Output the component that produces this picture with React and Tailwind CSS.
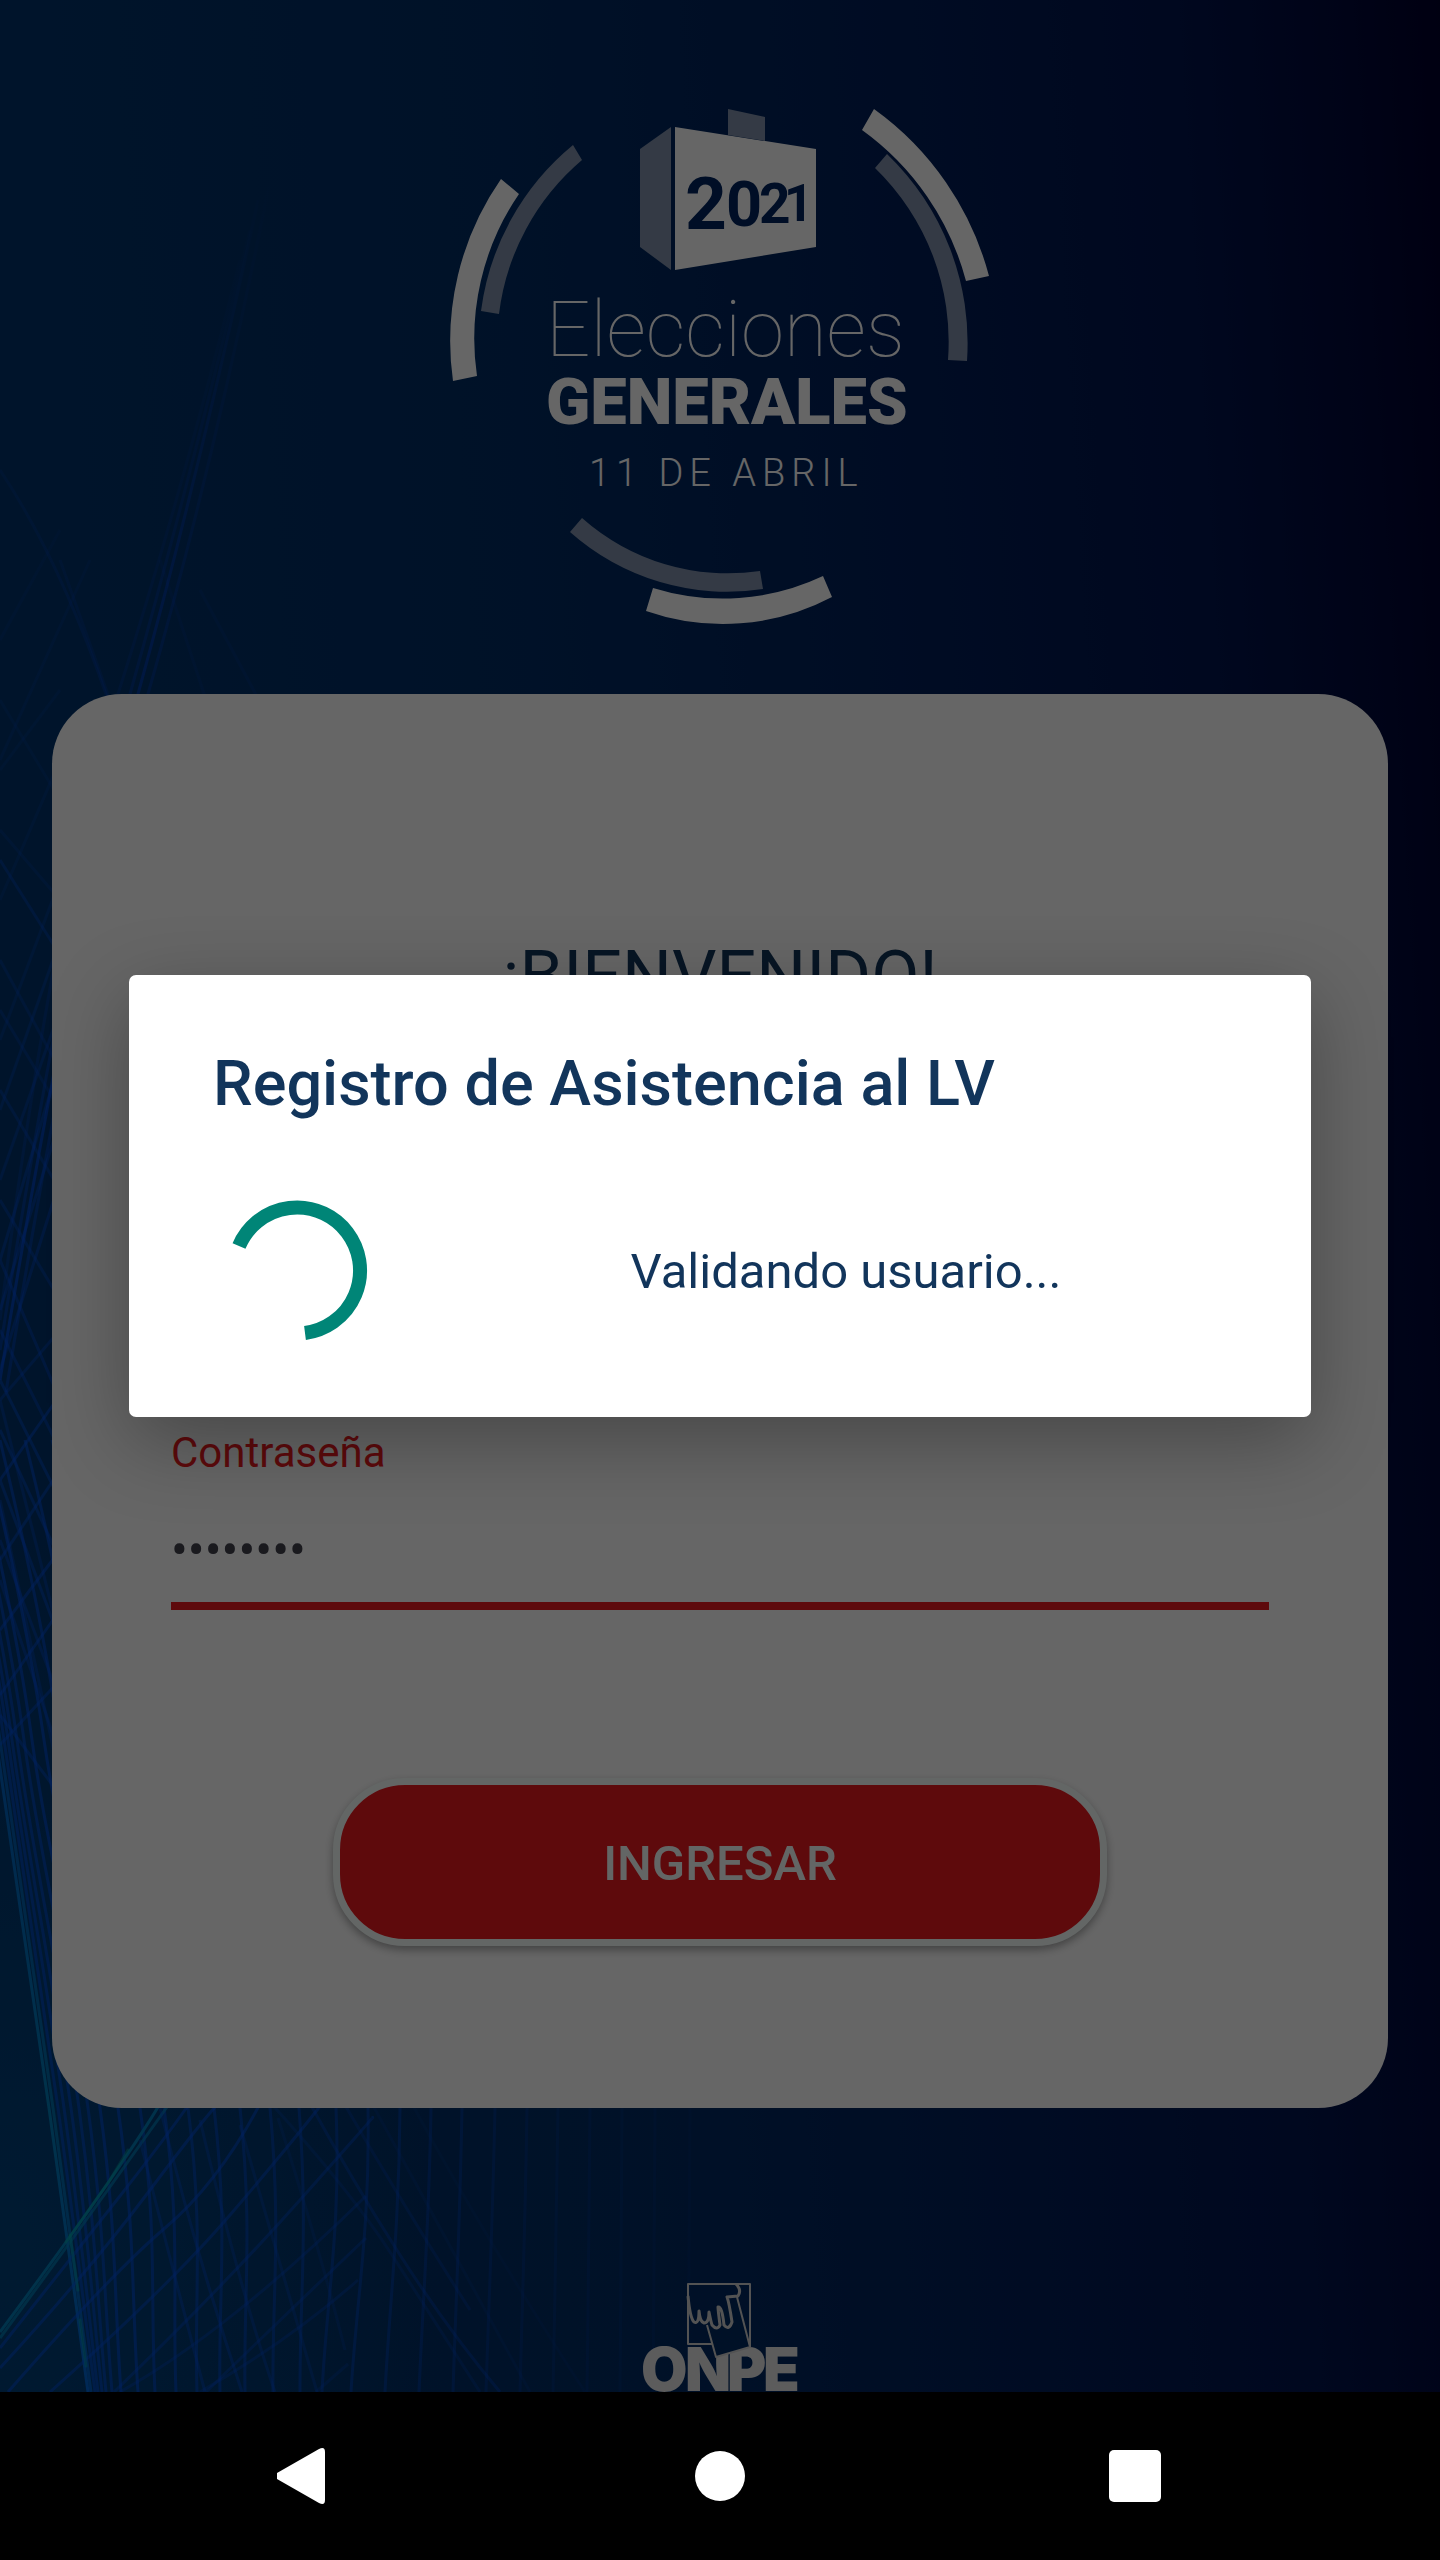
import React from "react";

/* Bundle that bends down from the left edge into the lower fan: [x at y=1740, x at y=2108, x at y=2392, opacity] */
const FAN = [
  [-4, 49, 88, 0.9], [0, 53, 91, 0.7], [4, 58, 95, 0.5], [8, 64, 98, 0.5], [12, 71, 102, 0.5],
  [17, 79, 106, 0.5], [24, 88, 112, 0.5], [32, 100, 121, 0.55], [44, 118, 138, 0.55], [60, 140, 155, 0.5],
  [85, 164, 176, 0.5], [112, 188, 197, 0.45], [142, 214, 220, 0.45], [175, 240, 245, 0.42], [212, 270, 273, 0.4],
  [250, 299, 300, 0.4], [295, 336, 322, 0.38], [340, 368, 351, 0.38], [390, 400, 385, 0.34], [430, 431, 419, 0.3],
  [465, 462, 453, 0.28], [500, 495, 486, 0.22], [530, 527, 520, 0.18], [560, 558, 553, 0.14], [590, 590, 587, 0.12],
  [622, 622, 620, 0.1], [655, 655, 653, 0.08], [690, 690, 688, 0.06],
];

function fanPath(a, b, c) {
  const upper = (c - a) / 652;
  const lower = (c - b) / 284;
  return [
    `M${a - 60} 1440 Q${a - upper * 130} 1610 ${a} 1740`,
    `C${a + upper * 123} 1863 ${b - upper * 123} 1985 ${b} 2108`,
    `S${c - lower * 95} 2297 ${c} 2392`,
  ].join(" ");
}

/* Strands rising from the lower left corner */
const RISING = [
  ["M0 2332 Q70 2238 110 2180 T162 2100", 0.9],
  ["M0 2338 Q72 2240 112 2184 T172 2100", 0.7],
  ["M0 2348 Q76 2252 120 2196 T192 2100", 0.5],
  ["M0 2368 Q90 2270 150 2190 T222 2100", 0.5],
  ["M8 2392 Q110 2275 165 2228 T262 2100", 0.5],
  ["M50 2392 Q170 2285 230 2215 T325 2100", 0.45],
  ["M114 2392 Q220 2290 300 2200 T372 2118", 0.38],
  ["M206 2392 Q280 2320 366 2238", 0.3],
  ["M120 2392 Q230 2330 366 2196", 0.3],
  ["M200 2392 Q290 2340 358 2280", 0.28],
  ["M316 2392 L348 2364", 0.2],
];

/* Strands falling to the right */
const FALLING = [
  ["M140 2140 Q165 2240 205 2392", 0.35],
  ["M160 2108 Q195 2250 242 2392", 0.35],
  ["M200 2120 Q240 2290 275 2392", 0.3],
  ["M240 2125 Q290 2300 317 2392", 0.26],
  ["M278 2118 Q320 2250 345 2350", 0.18],
  ["M268 2100 Q350 2190 392 2255 T480 2392", 0.2],
  ["M308 2100 Q352 2180 400 2255 T500 2392", 0.3],
  ["M342 2100 Q400 2200 470 2310", 0.22],
  ["M370 2100 Q430 2210 530 2392", 0.12],
  ["M410 2100 Q480 2230 585 2392", 0.08],
];

/* Long strands seen beside and above the card */
const LONG = [
  ["M258 200 Q200 470 138 694 T0 1380", 1],
  ["M250 230 Q190 480 130 694 T0 1350", 0.6],
  ["M240 260 Q180 500 118 694 T0 1320", 0.4],
  ["M270 180 Q215 460 148 694 T6 1392", 0.6],
  ["M0 470 Q60 560 108 700", 0.5],
  ["M60 560 L112 706", 0.4],
  ["M160 560 L208 706", 0.25],
  ["M200 590 L262 706", 0.25],
  ["M0 640 L60 530", 0.25],
  ["M0 760 L90 560", 0.3],
];

/* Lattice in the strip left of the card: [y at x=0, y at x=60, opacity] */
const LATTICE = [
  [700, 800, 0.12], [770, 690, 0.12], [830, 900, 0.16], [860, 955, 0.3], [900, 760, 0.14], [960, 1070, 0.22],
  [1040, 880, 0.2], [1010, 1110, 0.22], [1110, 940, 0.26], [1090, 1190, 0.28], [1180, 1010, 0.28], [1200, 1300, 0.3],
  [1260, 1060, 0.34], [1310, 1120, 0.35], [1260, 1400, 0.35], [1370, 1180, 0.35], [1330, 1450, 0.35], [1400, 1330, 0.3],
  [1380, 1500, 0.4], [1480, 1395, 0.45], [1430, 1560, 0.4], [1560, 1470, 0.4], [1480, 1640, 0.4], [1630, 1550, 0.45],
  [1540, 1700, 0.35], [1695, 1610, 0.45], [1580, 1755, 0.35], [1745, 1680, 0.4], [1500, 1780, 0.3], [1400, 1640, 0.3],
  [1715, 1795, 0.4],
];

function Backdrop() {
  return (
    <svg
      className="absolute inset-0 h-full w-full"
      viewBox="0 0 1440 2392"
      preserveAspectRatio="xMidYMid slice"
      aria-hidden="true"
    >
      <defs>
        <linearGradient id="base" x1="0" y1="0.1" x2="1" y2="0">
          <stop offset="0" stopColor="#00346c" />
          <stop offset="0.35" stopColor="#002c64" />
          <stop offset="0.6" stopColor="#00205a" />
          <stop offset="0.82" stopColor="#00144e" />
          <stop offset="0.94" stopColor="#00083a" />
          <stop offset="1" stopColor="#00002c" />
        </linearGradient>
        <radialGradient id="glow" cx="0" cy="0.94" r="0.3">
          <stop offset="0" stopColor="#00427c" />
          <stop offset="1" stopColor="#00427c" stopOpacity="0" />
        </radialGradient>
        <linearGradient id="bundle" gradientUnits="userSpaceOnUse" x1="0" y1="1700" x2="0" y2="2392">
          <stop offset="0" stopColor="#0060d0" />
          <stop offset="0.6" stopColor="#0084c0" />
          <stop offset="1" stopColor="#0068e0" />
        </linearGradient>
        <linearGradient id="fade" gradientUnits="userSpaceOnUse" x1="0" y1="180" x2="0" y2="1300">
          <stop offset="0" stopColor="#0048f0" stopOpacity="0" />
          <stop offset="0.4" stopColor="#0048f0" stopOpacity="0.4" />
          <stop offset="1" stopColor="#0050f0" stopOpacity="0.6" />
        </linearGradient>
      </defs>
      <rect width="1440" height="2392" fill="url(#base)" />
      <rect width="1440" height="2392" fill="url(#glow)" />
      <g fill="none" strokeWidth="3">
        {FAN.map(([a, b, c, o], i) => (
          <path key={i} d={fanPath(a, b, c)} stroke={i < 2 ? "url(#bundle)" : "#0054f0"} strokeOpacity={o} />
        ))}
        {RISING.map(([d, o], i) => (
          <path key={i} d={d} stroke={i < 2 ? "#0084c0" : "#0054f0"} strokeOpacity={o} />
        ))}
        {FALLING.map(([d, o], i) => (
          <path key={i} d={d} stroke="#0054f0" strokeOpacity={o} />
        ))}
        {LONG.map(([d, o], i) => (
          <path key={i} d={d} stroke="url(#fade)" strokeOpacity={o} />
        ))}
        {LATTICE.map(([a, b, o], i) => (
          <path key={i} d={`M0 ${a} L60 ${b}`} stroke="#0054f0" strokeOpacity={o} />
        ))}
      </g>
      <g fill="none" stroke="#00b4a8" strokeLinecap="round" strokeWidth="3" strokeOpacity="0.4">
        <path d="M66 2242 L110 2180 L128 2150" />
        <path d="M70 2235 L78 2290 M80 2320 L86 2366" />
      </g>
    </svg>
  );
}

function ElectionEmblem() {
  return (
    <svg
      className="h-auto w-[540px] max-w-full"
      viewBox="450 108 540 517"
      role="img"
      aria-label="2021 Elecciones Generales, 11 de abril"
      fontFamily="Roboto, sans-serif"
    >
      <g fill="#ffffff">
        <path d="M874 109 A300 300 0 0 1 989 276 L966 281 A272 272 0 0 0 862 130 Z" />
        <path d="M501 179 L519 194 A256 256 0 0 0 477 376 L453 381 A284 284 0 0 1 501 179 Z" />
        <path d="M653 588 A235 235 0 0 0 823 576 L832 597 A234 234 0 0 1 646 611 Z" />
        <path d="M675 127 L816 149 V247 L675 270 Z" />
      </g>
      <g fill="#8292ac">
        <path d="M887 154 A262 262 0 0 1 967 361 L948 360 A242 242 0 0 0 875 168 Z" />
        <path d="M573 145 L582 160 A240 240 0 0 0 499 314 L481 311 A258 258 0 0 1 573 145 Z" />
        <path d="M582 518 A220 220 0 0 0 760 571 L763 589 A236 236 0 0 1 570 532 Z" />
        <path d="M640 149 L671 127 V270 L640 247 Z" />
        <path d="M728 109 L765 117 V141 L728 135 Z" />
      </g>
      <g fill="#002560" fontWeight="700">
        <text x="685" y="229" fontSize="73">2</text>
        <text x="726" y="226" fontSize="63">0</text>
        <text x="759" y="223" fontSize="55">2</text>
        <text x="784" y="221" fontSize="51">1</text>
      </g>
      <g fill="#ffffff">
        <text x="546" y="356" fontSize="78" fontWeight="100">Elecciones</text>
        <text x="546" y="424" fontSize="65" fontWeight="900">GENERALES</text>
        <text x="589" y="486" fontSize="38" fontWeight="300" className="tracking-[6px]">11 DE ABRIL</text>
      </g>
    </svg>
  );
}

function OnpeLogo() {
  return (
    <svg className="h-[109px] w-[156px]" viewBox="642 2283 156 109" role="img" aria-label="ONPE">
      <g fill="#e6e6e6" fontFamily="Inter, sans-serif" fontWeight="900" fontSize="60">
        <text x="641" y="2391">O</text>
        <text x="685" y="2391">N</text>
        <text x="727" y="2391">P</text>
        <text x="763" y="2391">E</text>
      </g>
      <path d="M707 2325 L716 2357 L750 2347 L738 2298 Z" fill="#002b62" />
      <g fill="none" stroke="#cfcfcf" strokeWidth="2" strokeLinejoin="round">
        <path d="M712 2344 H688 V2284 H750 V2347" />
        <path d="M688 2296 Q690 2318 694 2322 Q699 2325 699 2311 Q700 2322 704 2323 Q709 2323 709 2312 Q711 2322 712 2325 Q717 2331 720 2325 Q718 2310 718 2307 Q722 2306 724 2325 Q729 2331 732 2322 Q729 2302 727 2297 L738 2296 Q742 2290 736 2284" strokeWidth="3" />
        <path d="M737 2297 L750 2347 L716 2357 L707 2325" />
      </g>
    </svg>
  );
}

function Spinner() {
  return (
    <svg className="size-[168px] shrink-0" viewBox="-84 -84 168 168" role="progressbar" aria-label="Cargando">
      <path d="M-58 -24 A63 63 0 1 1 8 63" fill="none" stroke="#008577" strokeWidth="14" />
    </svg>
  );
}

function LoginCard() {
  return (
    <form
      className="mt-[69px] flex w-full flex-col rounded-[70px] bg-white px-[119px] pt-[242px] pb-[162px]"
      onSubmit={(e) => e.preventDefault()}
    >
      <h1 className="text-center text-[70px] leading-[80px] text-[#12355b]">¡BIENVENIDO!</h1>
      <label htmlFor="password" className="mt-[412px] text-[42px] leading-[50px] text-[#eb1920]">
        Contraseña
      </label>
      <input
        id="password"
        type="password"
        defaultValue="12345678"
        className="h-[132px] w-full border-b-8 border-[#eb1920] bg-transparent pt-5 text-[50px] text-[#41414d] outline-none"
      />
      <button
        type="submit"
        className="mt-[168px] h-[168px] w-[774px] max-w-full self-center rounded-[72px] border-[7px] border-[#f8fffd] bg-[#eb1920] pt-1 text-[49px] font-medium text-[#f8fffd] shadow-[0_4px_8px_rgba(0,0,0,0.35)]"
      >
        INGRESAR
      </button>
    </form>
  );
}

function ProgressDialog() {
  return (
    <div className="absolute inset-0 flex items-center justify-center bg-black/60 px-[129px]">
      <div
        role="dialog"
        aria-modal="true"
        aria-labelledby="dialog-title"
        className="w-full rounded-[7px] bg-white px-[84px] pt-[72px] pb-[63px] text-[#12355b] shadow-[0_24px_80px_rgba(0,0,0,0.3)]"
      >
        <h2 id="dialog-title" className="text-[63px] leading-[74px] font-medium">
          Registro de Asistencia al LV
        </h2>
        <div className="mt-[65px] flex items-center">
          <Spinner />
          <p className="flex-1 pt-1 pl-[84px] text-center text-[49px] leading-[58px]">Validando usuario...</p>
        </div>
      </div>
    </div>
  );
}

function NavigationBar() {
  return (
    <nav className="grid h-[168px] grid-cols-3 place-items-center bg-black px-[98px]">
      <button type="button" aria-label="Atrás">
        <svg className="size-14" viewBox="0 0 56 56" fill="#fff">
          <path d="M0 25 L42 1 Q48 -2 48 4 V52 Q48 58 42 55 L0 31 Q-3 28 0 25 Z" />
        </svg>
      </button>
      <button type="button" aria-label="Inicio">
        <svg className="size-14" viewBox="0 0 56 56" fill="#fff">
          <circle cx="28" cy="28" r="25" />
        </svg>
      </button>
      <button type="button" aria-label="Recientes">
        <svg className="size-14" viewBox="0 0 56 56" fill="#fff">
          <rect x="2" y="2" width="52" height="52" rx="5" />
        </svg>
      </button>
    </nav>
  );
}

export default function App() {
  return (
    <div className="flex min-h-screen flex-col bg-black font-['Roboto',sans-serif]">
      <main className="relative flex flex-1 flex-col items-center overflow-hidden px-[52px]">
        <Backdrop />
        <div className="relative flex w-full flex-col items-center pt-[108px]">
          <ElectionEmblem />
          <LoginCard />
          <div className="mt-[175px]">
            <OnpeLogo />
          </div>
        </div>
        <ProgressDialog />
      </main>
      <NavigationBar />
    </div>
  );
}
